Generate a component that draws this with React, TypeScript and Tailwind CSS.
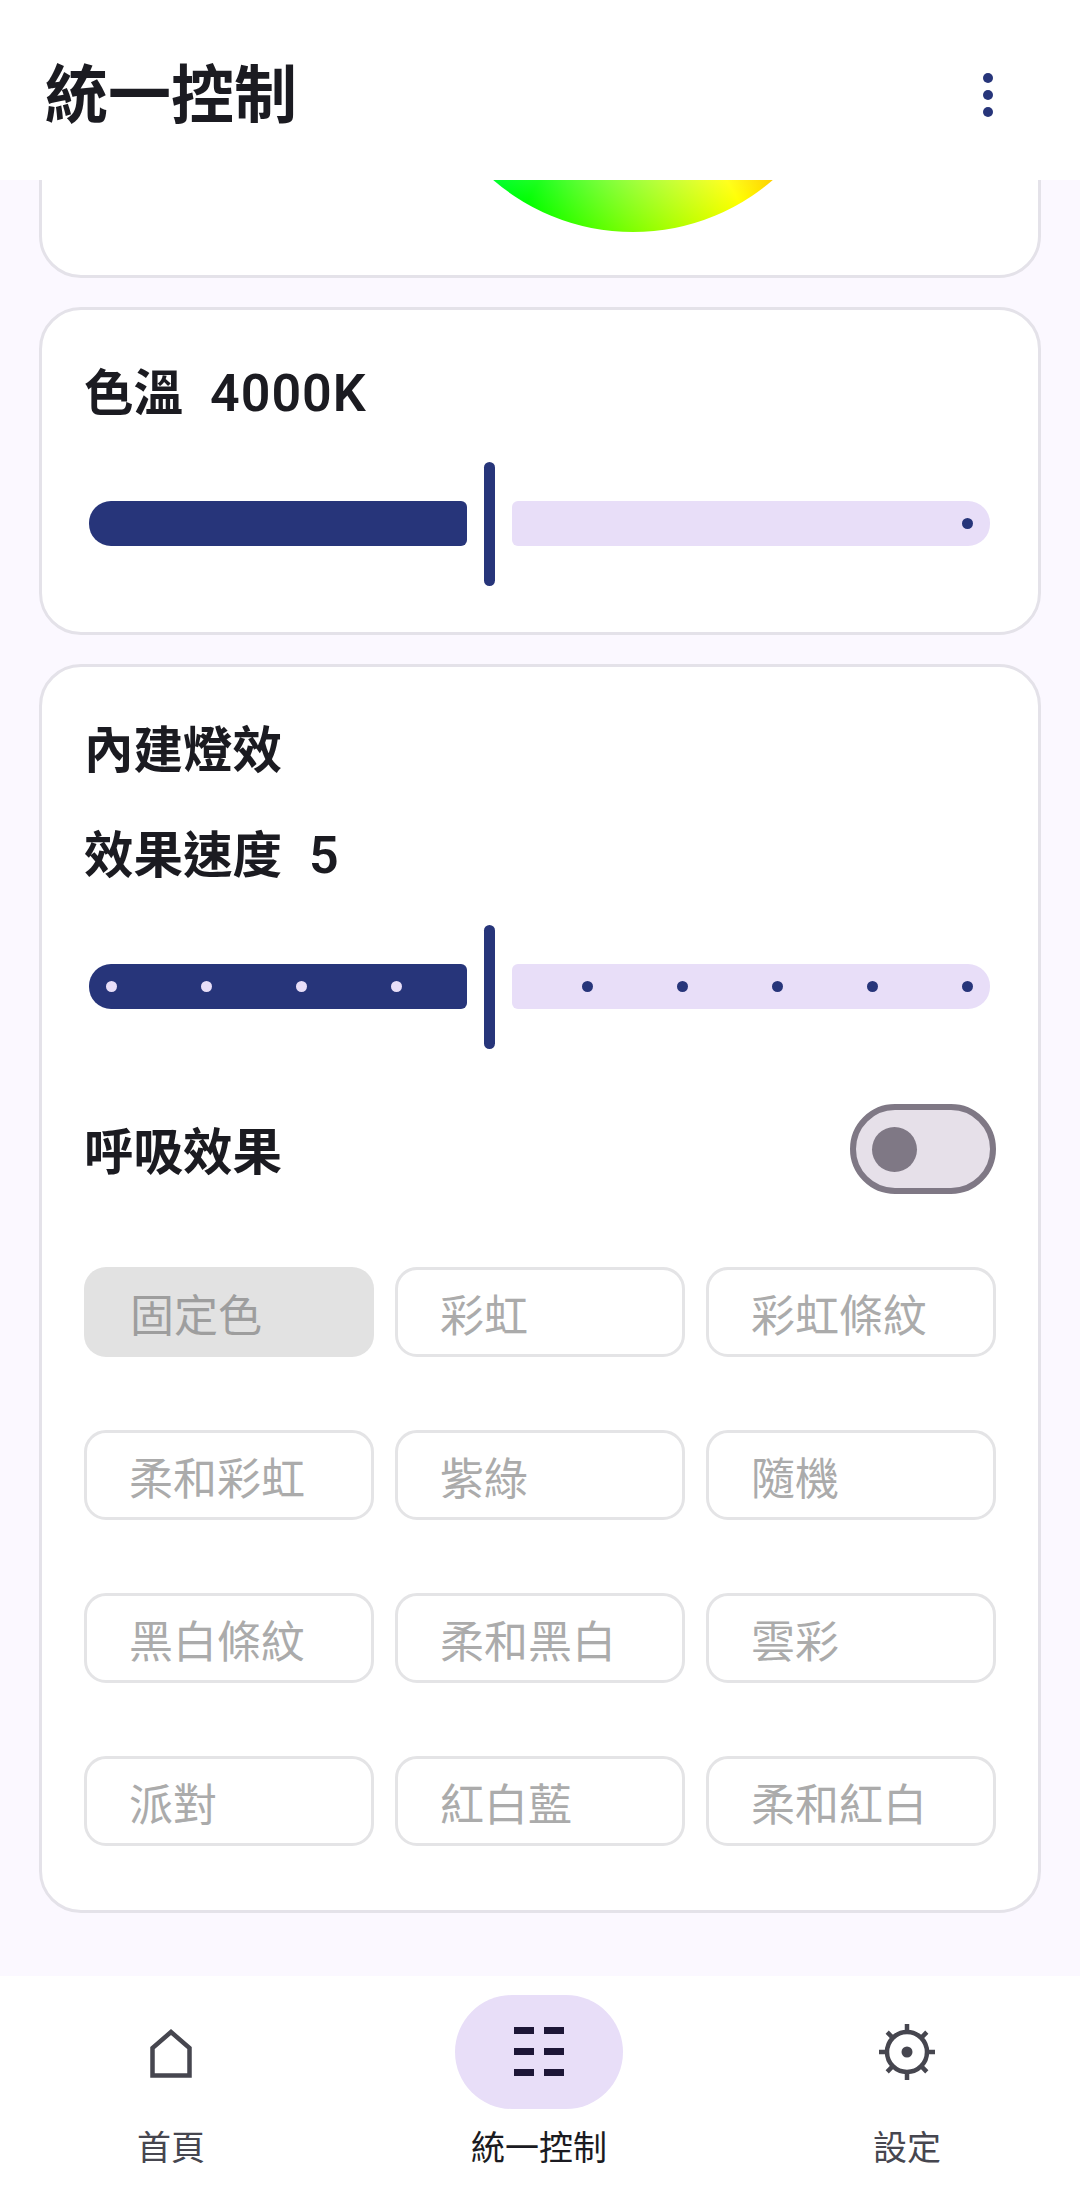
const FONT = "font-['Roboto','Noto_Sans_CJK_TC',sans-serif]";

const effects = [
  "固定色", "彩虹", "彩虹條紋",
  "柔和彩虹", "紫綠", "隨機",
  "黑白條紋", "柔和黑白", "雲彩",
  "派對", "紅白藍", "柔和紅白",
];

const Card = ({ className, children }: { className?: string; children: React.ReactNode }) => (
  <section className={`rounded-[42px] border-[3px] border-[#E4E2E9] bg-white px-[42px] ${className ?? ""}`}>
    {children}
  </section>
);

const Slider = ({ leftDots, rightDots }: { leftDots: number; rightDots: number }) => (
  <div className="ml-[5px] mr-[6px] flex h-[124px] items-start">
    <div className="mt-[39px] flex h-[45px] w-[378px] items-center gap-[84px] rounded-l-[22px] rounded-r-[6px] bg-[#27357A] pl-[17px]">
      {Array.from({ length: leftDots }).map((_, i) => (
        <span key={i} className="h-[11px] w-[11px] rounded-full bg-[#E8DEF8]" />
      ))}
    </div>
    <div className="mx-[17px] h-[124px] w-[11px] rounded-full bg-[#27357A]" />
    <div className="mt-[39px] flex h-[45px] flex-1 items-center justify-end gap-[84px] rounded-l-[6px] rounded-r-[22px] bg-[#E8DEF8] pr-[17px]">
      {Array.from({ length: rightDots }).map((_, i) => (
        <span key={i} className="h-[11px] w-[11px] rounded-full bg-[#27357A]" />
      ))}
    </div>
  </div>
);

const HomeIcon = () => (
  <svg className="mt-[2px]" width="44" height="51" viewBox="0 0 44 51" fill="none" stroke="#46464F" strokeWidth="4.5">
    <path d="M3.5 47.5V20L22 4l18.5 16v27.5z" />
  </svg>
);

const GridIcon = () => (
  <svg width="50" height="50" viewBox="0 0 50 50" fill="#1D1637">
    <rect x="0" y="0" width="20" height="7" />
    <rect x="30" y="0" width="20" height="7" />
    <rect x="0" y="21" width="20" height="7" />
    <rect x="30" y="21" width="20" height="7" />
    <rect x="0" y="42" width="20" height="7" />
    <rect x="30" y="42" width="20" height="7" />
  </svg>
);

const GearIcon = () => (
  <svg width="58" height="58" viewBox="0 0 58 58" fill="none" stroke="#46464F" strokeWidth="4.5">
    <circle cx="29" cy="29" r="20" />
    <circle cx="29" cy="29" r="5.5" fill="#46464F" stroke="none" />
    <path d="M29 1v8M29 49v8M1 29h8M49 29h8M9.2 9.2l5.6 5.6M43.2 43.2l5.6 5.6M48.8 9.2l-5.6 5.6M14.8 43.2l-5.6 5.6" />
  </svg>
);

export default function App() {
  return (
    <div className={`flex h-[2201px] w-[1080px] flex-col overflow-hidden bg-[#FBF8FF] text-[#1B1B21] ${FONT}`}>
      <header className="flex h-[180px] shrink-0 items-center justify-between bg-white pl-[45px] pr-[87px] pt-[10px]">
        <h1 className="text-[63px] font-semibold leading-none">統一控制</h1>
        <div className="flex flex-col gap-[6.5px]">
          <span className="h-[10.5px] w-[10.5px] rounded-full bg-[#27357A]" />
          <span className="h-[10.5px] w-[10.5px] rounded-full bg-[#27357A]" />
          <span className="h-[10.5px] w-[10.5px] rounded-full bg-[#27357A]" />
        </div>
      </header>

      <main className="flex flex-1 flex-col overflow-hidden px-[39px]">
        <Card className="-mt-[60px] h-[158px] shrink-0 overflow-hidden">
          <div className="relative -mt-[319px] ml-[335px] h-[428px] w-[428px] rounded-full bg-[conic-gradient(from_90deg,#ff0000,#ffff00,#00ff00,#00ffff,#0000ff,#ff00ff,#ff0000)]">
            <div className="absolute inset-0 rounded-full bg-[radial-gradient(closest-side,#ffffff_0%,rgba(255,255,255,0)_100%)]" />
          </div>
        </Card>

        <Card className="mt-[29px] shrink-0 pb-[46px] pt-[54px]">
          <h2 className="text-[49.5px] font-semibold leading-[60px]">
            色溫<span className="ml-[27px] text-[52px] tracking-[1px]">4000K</span>
          </h2>
          <div className="mt-[38px]">
            <Slider leftDots={0} rightDots={1} />
          </div>
        </Card>

        <Card className="mt-[29px] shrink-0 pb-[64px] pt-[54px]">
          <h2 className="text-[49.5px] font-semibold leading-[60px]">內建燈效</h2>
          <h2 className="mt-[45px] text-[49.5px] font-semibold leading-[60px]">
            效果速度<span className="ml-[27px] text-[52px]">5</span>
          </h2>
          <div className="mt-[39px]">
            <Slider leftDots={4} rightDots={5} />
          </div>

          <div className="mt-[55px] flex h-[90px] items-center justify-between">
            <span className="pt-[7px] text-[49.5px] font-semibold leading-[60px]">呼吸效果</span>
            <div className="flex h-[90px] w-[146px] items-center rounded-full border-[6px] border-[#7F7885] bg-[#E6E0E9] pl-[16px]">
              <span className="h-[45px] w-[45px] rounded-full bg-[#7F7885]" />
            </div>
          </div>

          <div className="mt-[73px] grid grid-cols-3 gap-x-[21px] gap-y-[73px]">
            {effects.map((name, i) => (
              <button
                key={name}
                className={`h-[90px] rounded-[22px] pt-[10px] text-left text-[44px] leading-none ${
                  i === 0
                    ? "bg-[#E2E2E2] pl-[46px] text-[#9E9E9E]"
                    : "border-[3px] border-[#E4E4E6] bg-white pl-[42px] text-[#ABABAB]"
                }`}
              >
                {name}
              </button>
            ))}
          </div>
        </Card>
      </main>

      <nav className="grid h-[225px] shrink-0 grid-cols-[repeat(3,368px)] justify-center bg-white pr-[2px] pt-[19px]">
        <div className="flex flex-col items-center">
          <div className="flex h-[114px] w-[168px] items-center justify-center rounded-full">
            <HomeIcon />
          </div>
          <span className="mt-[15px] text-[34px] leading-[48px] text-[#46464F]">首頁</span>
        </div>
        <div className="flex flex-col items-center">
          <div className="flex h-[114px] w-[168px] items-center justify-center rounded-full bg-[#E8DEF8]">
            <GridIcon />
          </div>
          <span className="mt-[15px] text-[34px] leading-[48px] text-[#1B1B21]">統一控制</span>
        </div>
        <div className="flex flex-col items-center">
          <div className="flex h-[114px] w-[168px] items-center justify-center rounded-full">
            <GearIcon />
          </div>
          <span className="mt-[15px] text-[34px] leading-[48px] text-[#46464F]">設定</span>
        </div>
      </nav>
    </div>
  );
}
